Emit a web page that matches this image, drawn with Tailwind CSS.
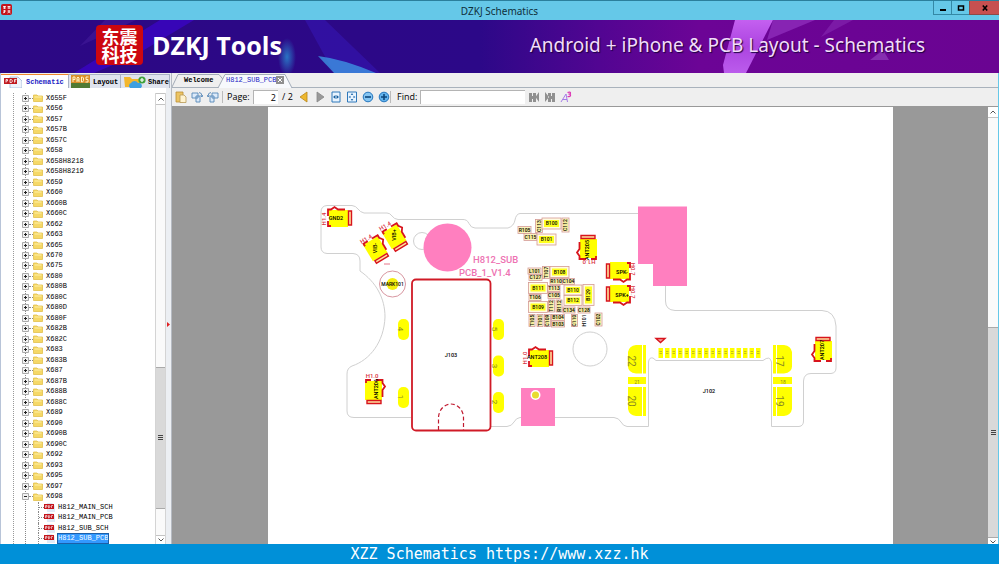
<!DOCTYPE html>
<html lang="en">
<head>
  <meta charset="UTF-8">
  <meta name="viewport" content="width=device-width, initial-scale=1.0">
  <title>DZKJ Schematics</title>
  <script src="https://cdn.jsdelivr.net/npm/@tailwindcss/browser@4"></script>
</head>
<body class="flex h-screen flex-col overflow-hidden bg-[#efefef] font-['Open_Sans',sans-serif] text-black">

  <!-- Title bar -->
  <header class="relative flex h-5 shrink-0 items-center justify-center border-t border-[#2b7f9c] bg-[#65c8e8]">
    <div class="absolute left-[1px] top-[3px] flex h-[11px] w-[11px] items-center justify-center rounded-xs bg-[#c3151c]">
      <svg class="h-[9px] w-[9px]" viewBox="0 0 9 9" fill="none" stroke="#fff" stroke-width="0.8"><path d="M1 1.5h3M1 3h3M2.5 1v3M5.5 1.5h3M5.5 3h3M7 1v3M1 6h3M2.5 5v3M1 8l1.5-1M5.5 6h3M7 5v2l-1.5 1M7 7l1.5 1"/></svg>
    </div>
    <h1 class="font-['Noto_Sans',sans-serif] text-[10px] leading-4 text-[#10303c]">DZKJ Schematics</h1>
    <div class="absolute right-0 top-0 flex h-[14px] text-black">
      <button aria-label="Minimize" class="flex w-[19px] items-center justify-center border border-t-0 border-[#3488a5]"><svg class="h-2 w-2" viewBox="0 0 8 8"><path d="M1 5h6v2H1z"/></svg></button>
      <button aria-label="Maximize" class="flex w-[17px] items-center justify-center border-b border-[#3488a5]"><svg class="h-2 w-2" viewBox="0 0 8 8" fill="none" stroke="#000" stroke-width="1.5"><path d="M1.5 2h5v4h-5z"/></svg></button>
      <button aria-label="Close" class="flex w-[30px] items-center justify-center border-b border-l border-[#8c4a48] bg-[#c75050]"><svg class="h-2 w-2" viewBox="0 0 8 8" stroke="#000" stroke-width="1.6"><path d="M1.8 1.5l4.4 5M6.2 1.5l-4.4 5"/></svg></button>
    </div>
  </header>

  <!-- Banner -->
  <section class="relative flex h-[53px] shrink-0 items-center justify-between overflow-hidden bg-[#2d0883] pb-1 pl-24 pr-[74px] text-white">
    <svg class="absolute inset-0 h-full w-full" viewBox="0 0 999 53" preserveAspectRatio="none">
      <defs>
        <linearGradient id="bg"><stop offset="0" stop-color="#2c0884"/><stop offset=".48" stop-color="#2c0888"/><stop offset=".6" stop-color="#520592"/><stop offset=".7" stop-color="#6c0496"/><stop offset="1" stop-color="#6a0492"/></linearGradient>
        <radialGradient id="glow"><stop offset="0" stop-color="#2a74c4"/><stop offset="1" stop-color="#2a74c4" stop-opacity="0"/></radialGradient>
        <linearGradient id="beam" x1="0" y1="0" x2="0" y2="1"><stop offset="0" stop-color="#c460f0"/><stop offset=".5" stop-color="#ac44e0"/><stop offset="1" stop-color="#bb5cec"/></linearGradient>
      </defs>
      <rect width="999" height="53" fill="url(#bg)"/>
      <path d="M160 0h34l-60 36-40 17H74z" fill="#4003d8" opacity=".6"/>
      <path d="M105 0h31L80 26z" fill="#5a30b0" opacity=".3"/>
      <ellipse cx="287" cy="37" rx="9" ry="19" fill="url(#glow)"/>
      <path d="M305 0h20l55 53h-46z" fill="#3d20d0" opacity=".35"/>
      <path d="M318 36q25 3 58 17h-42z" fill="#3d9be8" opacity=".75"/>
      <path d="M735 0h38l-27 53h-22l-1-8z" fill="url(#beam)"/>
      <path d="M773 0h42l-48 20z" fill="#9a3bc8" opacity=".6"/>
      <path d="M834 0h19l-32 17z" fill="#8c2fb8" opacity=".5"/>
      <path d="M870 40l13-10 6 10z" fill="#9240bc" opacity=".7"/>
    </svg>
    <div class="relative flex items-center gap-[9px]">
      <div class="flex h-10 w-[47px] flex-col items-center justify-center rounded-sm bg-[#cc0710] font-['Noto_Sans_CJK_SC',sans-serif] text-[18px] font-bold leading-[18px]">
        <span>东震</span>
        <span>科技</span>
      </div>
      <p class="text-[25px] font-bold leading-8">DZKJ Tools</p>
    </div>
    <p class="relative font-['Noto_Sans',sans-serif] text-[19px] leading-6 text-[#f2dcfa] text-shadow-[1px_1px_1px_#1c0340]">Android + iPhone &amp; PCB Layout - Schematics</p>
  </section>

  <main class="flex min-h-0 flex-1">
    <!-- Model tree -->
    <aside class="relative z-10 flex w-[166px] shrink-0 flex-col border-l border-[#b8c4d8] bg-white">
      <nav class="flex h-[15px] shrink-0 items-stretch bg-[#efefef] pt-px font-['Liberation_Mono',monospace] text-[7px] font-bold leading-[14px] whitespace-nowrap">
        <a href="#" class="flex w-[68px] shrink-0 items-center gap-1 border-r border-t border-[#a9b2c4] border-t-[#f0882c] bg-white pl-[3px] text-[#2222c4]">
          <svg class="h-3 w-[18px] shrink-0" viewBox="0 0 18 12"><path d="M6 1h8l4 4v7H6z" fill="#eef3fb" stroke="#9fb6d8" stroke-width=".8"/><path d="M0 2h13v6H0z" fill="#c01a20"/><path d="M2 6.500v-3h1.500v1.500H2M6 3.500v3h1.500l1-1.500-1-1.500zM10.500 6.500v-3h2M10.500 5h1.500" fill="none" stroke="#fff" stroke-width=".8"/></svg>
          Schematic
        </a>
        <a href="#" class="flex w-[52px] shrink-0 items-center gap-[3px] border-r border-t border-[#a9b2c4] bg-[#dfe3ee] pl-[2px]">
          <svg class="h-[13px] w-[19px] shrink-0" viewBox="0 0 19 13"><path d="M0 0h19v13H0z" fill="#d98f2b"/><path d="M0 8h19v5H0z" fill="#517b34"/><path d="M2 7V2h2v2.500H2M6 7V3l1-1 1 1v4M6 5h2M10.500 2v5h1l1-1.500V3l-1-1zM17.500 2H15v2.500h2V7h-2.500" fill="none" stroke="#fff5c8"/></svg>
          Layout
        </a>
        <a href="#" class="flex w-[49px] shrink-0 items-center gap-[2px] border-r border-t border-[#a9b2c4] bg-[#dfe3ee] pl-[3px]">
          <svg class="h-3 w-[22px] shrink-0" viewBox="0 0 22 12"><path d="M0 1h6l2 2h7v8H1z" fill="#f3b62c"/><path d="M6 12a3 3 0 0 1 1-5 4 4 0 0 1 7 0 3 3 0 0 1 3 5z" fill="#3d9fe0"/><circle cx="18" cy="4" r="3.600" fill="#3fa13b"/><path d="M18 2v4M16 4h4" stroke="#fff" stroke-width="1.200"/></svg>
          Share
        </a>
      </nav>
      <div class="flex min-h-0 flex-1 pt-[5px]">
        <ul id="tree" class="relative flex min-w-0 flex-1 flex-col font-['Liberation_Mono',monospace] text-[7px] leading-[9px] whitespace-nowrap">
          <li class="absolute inset-y-0 left-3 border-l border-dotted border-[#999]"></li>
          <li class="absolute inset-y-0 left-6 border-l border-dotted border-[#888]"></li>
        </ul>
        <div class="flex w-[11px] flex-col border-x border-[#d4d4d4] bg-[#fafafa]">
          <button aria-label="Scroll up" class="flex h-3 items-center justify-center border-y border-[#c4c4c4] bg-white"><svg class="h-1 w-1.5" viewBox="0 0 6 4" fill="none" stroke="#555"><path d="M.5 3.500L3 1l2.500 2.500"/></svg></button>
          <div class="flex-[263]"></div>
          <div class="flex flex-[141] items-center justify-center border-y border-[#aaa] bg-[#d9d9d9]"><svg class="h-[5px] w-[5px]" viewBox="0 0 5 5" stroke="#444"><path d="M0 .5h5M0 2.500h5M0 4.500h5"/></svg></div>
          <div class="flex-[26]"></div>
          <button aria-label="Scroll down" class="flex h-[9px] items-center justify-center border-t border-[#c4c4c4] bg-white"><svg class="h-1 w-1.5" viewBox="0 0 6 4" fill="none" stroke="#555"><path d="M.5 .5L3 3L5.500 .5"/></svg></button>
        </div>
      </div>
    </aside>

    <!-- Splitter -->
    <div class="flex w-1.5 shrink-0 items-center border-r border-[#b5bac2] bg-[#eceff3]">
      <svg class="mt-8 h-[5px] w-1" viewBox="0 0 4 5"><path d="M1 0l3 2.500L1 5z" fill="#e02020"/></svg>
    </div>

    <!-- Document pane -->
    <section class="flex min-w-0 flex-1 flex-col border-r border-[#65c8e8]">
      <nav class="relative flex h-[15px] shrink-0 items-center border-b border-[#a9b2bc] font-['Liberation_Mono',monospace] text-[7px] leading-[14px] whitespace-nowrap">
        <svg class="absolute left-0 top-0 h-[15px] w-[122px]" viewBox="0 0 122 15" stroke="#8e99a8" stroke-width=".8"><path d="M0 14L6 1.500h41l5 6" fill="none"/><path d="M46 15L53 1.500h60L120 15" fill="#f7f9fc"/></svg>
        <a href="#" class="relative w-[42px] pl-3 font-bold">Welcome</a>
        <a href="#" class="relative ml-3 text-[#2222c4]">H812_SUB_PCB</a>
        <button aria-label="Close tab" class="relative flex h-2 w-2 items-center justify-center bg-[#8f8f8f]"><svg class="h-1 w-1" viewBox="0 0 4 4" stroke="#fff"><path d="M0 0l4 4M4 0L0 4"/></svg></button>
      </nav>

      <!-- Toolbar -->
      <div class="flex h-[19px] shrink-0 items-center border-b border-[#999] bg-[#efefef] pl-[3px] text-[9px] leading-3">
        <div class="flex items-center gap-1 border-r border-[#bbb] pr-[3px]">
          <button aria-label="Copy"><svg class="h-3 w-3" viewBox="0 0 12 12"><path d="M1 1h7v10H1z" fill="#ecc463" stroke="#bd8f35" stroke-width=".8"/><path d="M5 4h4l2 2v5.500H5z" fill="#fff3cf" stroke="#b89a58" stroke-width=".8"/></svg></button>
          <button aria-label="Rotate left"><svg class="h-3 w-3" viewBox="0 0 12 12" fill="#dbeafa" stroke="#5688b8" stroke-width=".9"><path d="M1 2h6v5H1zM5 5h4v6H5z"/><path d="M8 1.500q3 0 3 4M9.500 4.500l1.500 1.500.8-2" fill="none"/></svg></button>
          <button aria-label="Rotate right"><svg class="h-3 w-3" viewBox="0 0 12 12" fill="#dbeafa" stroke="#5688b8" stroke-width=".9"><path d="M5 2h6v5H5zM3 5h4v6H3z"/><path d="M4 1.500q-3 0-3 4M2.500 4.500L1 6 .2 4" fill="none"/></svg></button>
        </div>
        <label for="page" class="ml-1 w-[26px]">Page:</label>
        <input id="page" value="2" class="h-[14px] w-[25px] border-l border-t border-[#b4b4b4] bg-white pr-0.5 text-right">
        <span class="ml-1 w-4">/ 2</span>
        <div class="flex items-center gap-1 border-r border-[#bbb]">
          <button aria-label="Previous page"><svg class="h-3 w-3" viewBox="0 0 12 12"><path d="M9 1v10L2 6z" fill="#edb72e" stroke="#b98718" stroke-width=".8"/></svg></button>
          <button aria-label="Next page"><svg class="h-3 w-3" viewBox="0 0 12 12"><path d="M3 1v10l7-5z" fill="#999" stroke="#888" stroke-width=".8"/></svg></button>
          <button aria-label="Fit width"><svg class="h-3 w-3" viewBox="0 0 12 12"><path d="M2 1h8v10H2z" fill="#e8f4ff" stroke="#2f78ba"/><path d="M3 6l2.500-2v4zM9 6L6.500 4v4z" fill="#125c9c"/></svg></button>
          <button aria-label="Fit page"><svg class="h-3 w-3" viewBox="0 0 12 12"><path d="M1.500 1h9v10h-9z" fill="#e8f4ff" stroke="#2f78ba"/><path d="M6 2l1.300 2H4.700zM6 10l1.300-2H4.700zM2.500 6l2-1.300v2.600zM9.500 6l-2-1.300v2.600z" fill="#2a6fae"/></svg></button>
          <button aria-label="Zoom out"><svg class="h-3 w-3" viewBox="0 0 12 12"><circle cx="6" cy="6" r="4.800" fill="#85c5f2" stroke="#2475bd"/><path d="M3 6h6" stroke="#0d467c" stroke-width="1.600"/></svg></button>
          <button aria-label="Zoom in"><svg class="h-3 w-3" viewBox="0 0 12 12"><circle cx="6" cy="6" r="4.800" fill="#62b2ec" stroke="#2475bd"/><path d="M3 6h6M6 3v6" stroke="#0d467c" stroke-width="1.600"/></svg></button>
        </div>
        <label for="find" class="ml-1.5 w-[23px]">Find:</label>
        <input id="find" class="h-[14px] w-[105px] border-l border-t border-[#b4b4b4] bg-white px-1">
        <div class="ml-[3px] flex items-center gap-1">
          <button aria-label="Find previous"><svg class="h-3 w-3" viewBox="0 0 12 12" fill="#909090"><path d="M1 2h3v9H1zM5 2h3v9H5zM4 5h2v3H4zM11 1v10L7.500 6z"/></svg></button>
          <button aria-label="Find next"><svg class="h-3 w-3" viewBox="0 0 12 12" fill="#909090"><path d="M4 2h3v9H4zM8 2h3v9H8zM7 5h2v3H7zM1 1v10l4-5z"/></svg></button>
          <button aria-label="Match case"><svg class="h-3 w-3" viewBox="0 0 12 12" fill="none"><path d="M1 11l5-8 1.500 8M3 8.500h4" stroke="#a67be8"/><path d="M7.500 1.500q3-1 3 .5t-2 1q2.500 0 2 1.500t-3 1" stroke="#dc35b4" stroke-width="1.200"/></svg></button>
        </div>
      </div>

      <!-- Page view -->
      <div class="flex min-h-0 flex-1 bg-[#999]">
        <div class="flex min-w-0 flex-1 justify-center">
          <div class="w-[625px] max-w-full bg-white">
            <svg class="h-full w-full font-['Roboto',sans-serif]" viewBox="268 107 625 437" preserveAspectRatio="xMidYMin meet">
              <defs>
                <g id="contact">
                  <path d="M-10-8H9V9H-10z" fill="#ff0"/>
                  <path d="M-11-2V-8.500H-8L-4.500-11-1-8.500H6M-11 3V8H-8" fill="none" stroke="#d8141c" stroke-width="1.800"/>
                  <path d="M9.500-7H12.500V7H9.500z" fill="#ffe0a0" stroke="#d8141c" stroke-width="1.400"/>
                </g>
              </defs>

              <!-- Board outline -->
              <path fill="none" stroke="#d0d0d0" d="M638 213.500H520Q516 214 515 220T508 228H475Q471 228 469 223.500T462 219.500H398Q394 219 392 216T387 213H364Q360 212 358 209T352 205.500H327Q321 206 321 212V247Q321 253 327 253.500H353Q360 254 360 261V271C376 282 385 298 385 317C384 342 370 360 352 366Q347 368 347 374V411Q347 417.500 354 417.500H411M491 426.500H507Q512 426 514 422T520 417.500H614Q619 418 621 422T627 426.500H648.500V362Q649 357 653 358L656 360.500H763Q770 355 771.500 362V426.500H799Q803.500 426 803.500 421V381Q804 373.500 811 373.500H831Q836 373 836 368V326Q835 311 822 310.500H675Q665.500 310 665.500 301V286"/>
              <circle cx="590" cy="349" r="17" fill="none" stroke="#d0d0d0"/>
              <circle cx="422" cy="241" r="8.500" fill="none" stroke="#d0d0d0"/>

              <!-- Copper areas -->
              <g fill="#ff7fbf">
                <circle cx="447.500" cy="247.500" r="24"/>
                <path d="M638 206.500h49V286H653V264H638zM521 388h34v38H521z"/>
              </g>
              <circle cx="535.500" cy="395" r="5" fill="#fff"/>
              <circle cx="535.500" cy="395" r="3.500" fill="#e8dc30"/>
              <g fill="#ee72b2" font-size="9.500" font-weight="500">
                <text x="473" y="263">H812_SUB</text>
                <text x="459" y="276">PCB_1_V1.4</text>
              </g>
              <circle cx="392.500" cy="284" r="13" fill="#fff" stroke="#cd7b88" stroke-width=".8"/>
              <circle cx="392.500" cy="284" r="6" fill="#f4ee10"/>
              <path d="M384 264h6" stroke="#e0506a" stroke-width=".8"/>

              <!-- J103 connector -->
              <g fill="#ff0">
                <rect x="398" y="319" width="11" height="21" rx="5"/>
                <rect x="398" y="387" width="11" height="21" rx="5"/>
                <rect x="493" y="319" width="11" height="21" rx="5"/>
                <rect x="493" y="355.500" width="11" height="21" rx="5"/>
                <rect x="493" y="392" width="11" height="21" rx="5"/>
              </g>
              <rect x="412" y="279.500" width="78.500" height="151" rx="4" fill="#fff" stroke="#d01a26" stroke-width="1.800"/>
              <path d="M438.500 430V418a12.500 14 0 0 1 25 0V430" fill="none" stroke="#c01a30" stroke-width="1.200" stroke-dasharray="4 2.500"/>

              <!-- J102 connector -->
              <g fill="#ff0">
                <path d="M636 345h6v28.500h-6q-8-1-8-7V352q1-6 8-7zM643 345h3v28.500h-3zM628 377h18v7h-18zM628 387h14v29h-6q-7-1-8-7zM643 387h3v29h-3z"/>
                <path d="M784 345h-7v28.500h7q8-1 8-7V352q-1-6-8-7zM773 345h3v28.500h-3zM773 377h19v7h-19zM792 387h-15v29h7q7-1 8-7zM773 387h3v29h-3z"/>
                <g id="fingers"></g>
              </g>
              <path d="M656 338.500h9l-4.500 4z" fill="#f4a0a0" stroke="#d8141c" stroke-width="1.400"/>

              <use href="#contact" transform="translate(339 218)"/>
              <use href="#contact" transform="translate(376 249) rotate(59)"/>
              <use href="#contact" transform="translate(395 237) rotate(59)"/>
              <use href="#contact" transform="translate(588 248) rotate(-90)"/>
              <use href="#contact" transform="translate(619 271) rotate(180)"/>
              <use href="#contact" transform="translate(619 294) rotate(180)"/>
              <use href="#contact" transform="translate(540 358)"/>
              <use href="#contact" transform="translate(374 391) rotate(90)"/>
              <use href="#contact" transform="translate(823 350) rotate(-90)"/>
              <g id="parts"></g>
              <g id="labels" text-anchor="middle"></g>
            </svg>
          </div>
        </div>
        <div class="flex w-[10px] flex-col bg-[#fafafa]">
          <button aria-label="Page up" class="flex h-[11px] items-center justify-center border-b border-[#c4c4c4] bg-white"><svg class="h-1 w-1.5" viewBox="0 0 6 4" fill="none" stroke="#555"><path d="M.5 3.500L3 1l2.500 2.500"/></svg></button>
          <div class="flex-[210]"></div>
          <div class="flex flex-[210] items-center justify-center border-y border-[#aaa] bg-[#d9d9d9]"><svg class="h-[5px] w-[5px]" viewBox="0 0 5 5" stroke="#444"><path d="M0 .5h5M0 2.500h5M0 4.500h5"/></svg></div>
          <button aria-label="Page down" class="flex h-[6px] items-end justify-center bg-white"><svg class="h-1 w-1.5" viewBox="0 0 6 4" fill="none" stroke="#555"><path d="M.5 .5L3 3L5.500 .5"/></svg></button>
        </div>
      </div>
    </section>
  </main>

  <footer class="h-5 shrink-0 bg-[#0090d8] text-center font-['DejaVu_Sans_Mono',monospace] text-[15px] leading-5 text-white">XZZ Schematics https://www.xzz.hk</footer>

  <script>
    const folders = ["X655F", "X656", "X657", "X657B", "X657C", "X658", "X658H8218", "X658H8219", "X659", "X660", "X660B", "X660C", "X662", "X663", "X665", "X670", "X675", "X680", "X680B", "X680C", "X680D", "X680F", "X682B", "X682C", "X683", "X683B", "X687", "X687B", "X688B", "X688C", "X689", "X690", "X690B", "X690C", "X692", "X693", "X695", "X697", "X698"];
    const files = ["H812_MAIN_SCH", "H812_MAIN_PCB", "H812_SUB_SCH", "H812_SUB_PCB"];
    const tree = document.getElementById("tree");

    folders.forEach(name => {
      const open = name === "X698";
      tree.insertAdjacentHTML("beforeend", `
        <li class="relative flex min-h-0 flex-1 items-center pl-[21px]">
          <button aria-label="Toggle ${name}"><svg class="block h-[7px] w-[7px]" viewBox="0 0 7 7"><path d="M.5 .5h6v6h-6z" fill="#f2f2f2" stroke="#aaa"/><path d="M2 3.500h3${open ? "" : "M3.500 2v3"}" stroke="#222"/></svg></button>
          <span class="w-1 border-t border-dotted border-[#888]"></span>
          <svg class="mr-[3px] h-2 w-[10px]" viewBox="0 0 10 8"><path d="M.5 1h3.500l1 1h4.500v5.500h-9z" fill="#f5d867" stroke="#e2c04c" stroke-width=".8"/><path d="M1.500 3h7" stroke="#fff0a8"/></svg>
          <span>${name}</span>
        </li>`);
    });

    files.forEach(name => {
      const selected = name === "H812_SUB_PCB";
      tree.insertAdjacentHTML("beforeend", `
        <li class="relative flex min-h-0 flex-1 items-center pl-[37px]">
          <span class="self-stretch border-l border-dotted border-[#888]"></span>
          <span class="w-[5px] border-t border-dotted border-[#888]"></span>
          <svg class="mr-[3px] h-[9px] w-[11px]" viewBox="0 0 11 9"><path d="M3 0h5l3 3v6H3z" fill="#dfebf8"/><path d="M0 1h10v5H0z" fill="#c4161e"/><path d="M1.500 5V2.500H3V4H1.500M4.500 2.500V5L6 4V3zM7.500 5V2.500h1.500" fill="none" stroke="#fff" stroke-width=".6"/></svg>
          <span class="${selected ? "bg-[#3399ff] text-white outline outline-[#1c5fa8]" : ""}">${name}</span>
        </li>`);
    });

    // name, centre x, centre y, width, height, upright
    const parts = [
      ["R105", 524.5, 230, 13, 7], ["C113", 539, 226, 7, 13, 1], ["B100", 551.5, 223.5, 19, 11], ["C112", 565.5, 225, 7, 14, 1],
      ["C115", 530.5, 237, 13, 7], ["B101", 546.5, 239.5, 19, 11], ["L101", 534.5, 271, 13, 6], ["C127", 535.5, 277.5, 13, 6],
      ["T107", 546, 272.5, 7, 12, 1], ["B108", 559.5, 272, 19, 11], ["R110", 556, 281.5, 12, 6], ["C104", 568.5, 281.5, 12, 6],
      ["B111", 538, 288, 19, 11], ["T113", 554, 288.5, 12, 6], ["B110", 573, 290, 18, 10], ["B129", 588.5, 295, 11, 21, 1],
      ["T106", 535, 297.5, 12, 6], ["C105", 554, 295.5, 12, 6], ["B112", 573, 300.5, 18, 10], ["B109", 538, 307, 19, 11],
      ["T112", 551.5, 306, 6, 12, 1], ["R112", 559, 306, 6, 12, 1], ["C134", 569, 310, 12, 6], ["C128", 584, 310, 12, 6],
      ["T105", 532, 320.5, 6, 12, 1], ["T101", 540, 320.5, 6, 12, 1], ["C109", 547.5, 320.5, 6, 12, 1], ["B104", 558, 317.5, 13, 6],
      ["B103", 558, 324, 13, 6], ["C110", 574.5, 320.5, 6, 12, 1], ["C102", 598.5, 319.5, 7, 13, 1],
    ];
    document.getElementById("parts").innerHTML = parts.map(([name, x, y, w, h, up]) => {
      const big = w > 15 || h > 15;
      const pad = big ? 2 : 1;
      return `<rect x="${x - w / 2}" y="${y - h / 2}" width="${w}" height="${h}" fill="#fffbe0" stroke="#d49a94" stroke-width=".8"/>
        <rect x="${x - w / 2 + pad}" y="${y - h / 2 + pad}" width="${w - pad * 2}" height="${h - pad * 2}" fill="${big ? "#ffff20" : "#f3ea9a"}"/>
        <text transform="translate(${x} ${y}) rotate(${up ? -90 : 0})" y="1.800" text-anchor="middle" font-size="5" font-weight="500">${name}</text>`;
    }).join("");

    // text, x, y, angle, size, colour
    const red = "#d83040";
    const labels = [
      ["GND2", 336, 218, 0, 5.5, "#000"], ["VIB-", 375.500, 248, -90, 5.5, "#000"], ["VIB+", 394.500, 235, -90, 5.5, "#000"],
      ["MARK101", 392.5, 284, 0, 5, "#000"], ["ANT205", 587, 250, -90, 5.5, "#000"], ["SPK-", 622, 272, 0, 5.5, "#000"],
      ["SPK+", 622, 295, 0, 5.5, "#000"], ["ANT208", 537, 357, 0, 5.5, "#000"], ["ANT206", 376, 389, -90, 5.5, "#000"],
      ["ANT207", 822, 350, -90, 5.5, "#000"], ["J103", 451, 355, 0, 5.5, "#000"], ["J102", 709, 391, 0, 5.5, "#000"],
      ["H101", 584.5, 320.5, -90, 5, "#000"],
      ["H1.4", 324, 219, -90, 6, red], ["H1.4", 385, 226, -30, 6, red], ["H1.4", 366, 239, -30, 6, red], ["H1.0", 589, 262, 180, 6, red],
      ["H0.7", 633, 269, 90, 6, red], ["H0.7", 633, 292, 90, 6, red], ["H1.0", 525, 358, -90, 6, red], ["H1.0", 372, 376, 0, 6, red],
      ["4", 401, 329, 90, 8, "#8a8a20"], ["1", 401, 397, 90, 8, "#8a8a20"], ["5", 495, 329, 90, 8, "#8a8a20"],
      ["3", 495, 366, 90, 8, "#8a8a20"], ["2", 495, 402, 90, 8, "#8a8a20"],
      ["22", 632, 361, 90, 10, "#8a8a20"], ["20", 632, 401, 90, 10, "#8a8a20"], ["21", 637, 382, 0, 5, "#8a8a20"],
      ["17", 780, 361, 90, 10, "#8a8a20"], ["19", 780, 401, 90, 10, "#8a8a20"], ["18", 783, 382, 0, 5, "#8a8a20"],
    ];
    document.getElementById("labels").innerHTML = labels.map(([text, x, y, angle, size, color]) =>
      `<text transform="translate(${x} ${y}) rotate(${angle})" y="${size * 0.36}" font-size="${size}" font-weight="${color === "#8a8a20" ? 400 : 500}" fill="${color}">${text}</text>`
    ).join("");

    // Contact fingers along the top edge of J102
    const fingers = document.getElementById("fingers");
    for (let i = 0; i < 16; i++) {
      const x = 658.5 + i * 6.5;
      fingers.insertAdjacentHTML("beforeend", `<rect x="${x}" y="348" width="4.500" height="10"/><path d="M${x + 1} 351.500h2.500M${x + 1} 353.500h2.500" stroke="#b5b020" stroke-width=".8"/>`);
    }
  </script>
</body>
</html>
